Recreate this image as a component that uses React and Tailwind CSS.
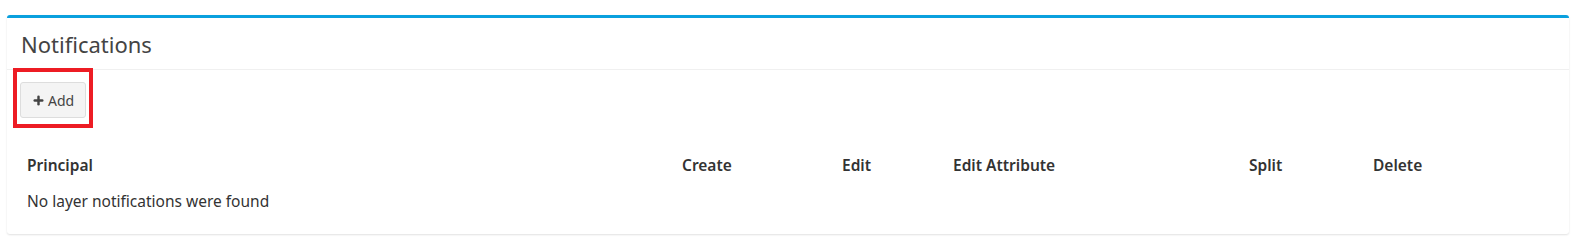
import { Plus } from 'lucide-react'

const COLUMNS = ['Principal', 'Create', 'Edit', 'Edit Attribute', 'Split', 'Delete']

export default function App() {
  return (
    <div className="h-[249px] bg-white pt-[15px] pl-[7px] pr-[9px] font-['Noto_Sans','Liberation_Sans',sans-serif] text-[#333]">
      <div className="rounded-[3px] border-t-[3px] border-[#0aa0de] bg-white shadow-[0_1px_2px_rgba(0,0,0,0.12)]">
        {/* header */}
        <div className="flex h-[52px] items-center border-b border-[#f0f0f0] px-[14px]">
          <h3 className="text-[22px] leading-none text-[#444]">Notifications</h3>
        </div>

        {/* body */}
        <div className="px-[13px] pt-[12px] pb-[22px]">
          <div className="relative inline-block">
            <button className="flex h-[36px] items-center gap-[3px] rounded-[3px] border border-[#ddd] bg-[#f4f4f4] px-[11px] text-[14px] text-[#444]">
              <Plus size={13} strokeWidth={4.5} className="text-[#444]" />
              Add
            </button>
            <div className="pointer-events-none absolute -top-[14px] -left-[7px] h-[60px] w-[80px] border-[4px] border-[#ed1c24]" />
          </div>

          <div className="mt-[30px] px-[7px] text-[15.5px] leading-[22px]">
            <div className="grid grid-cols-[655px_160px_111px_296px_124px_1fr] font-semibold text-[#333]">
              {COLUMNS.map((c) => (
                <div key={c} className="py-[6px]">{c}</div>
              ))}
            </div>
            <div className="mt-[8px] text-[#333]">No layer notifications were found</div>
          </div>
        </div>
      </div>
    </div>
  )
}
